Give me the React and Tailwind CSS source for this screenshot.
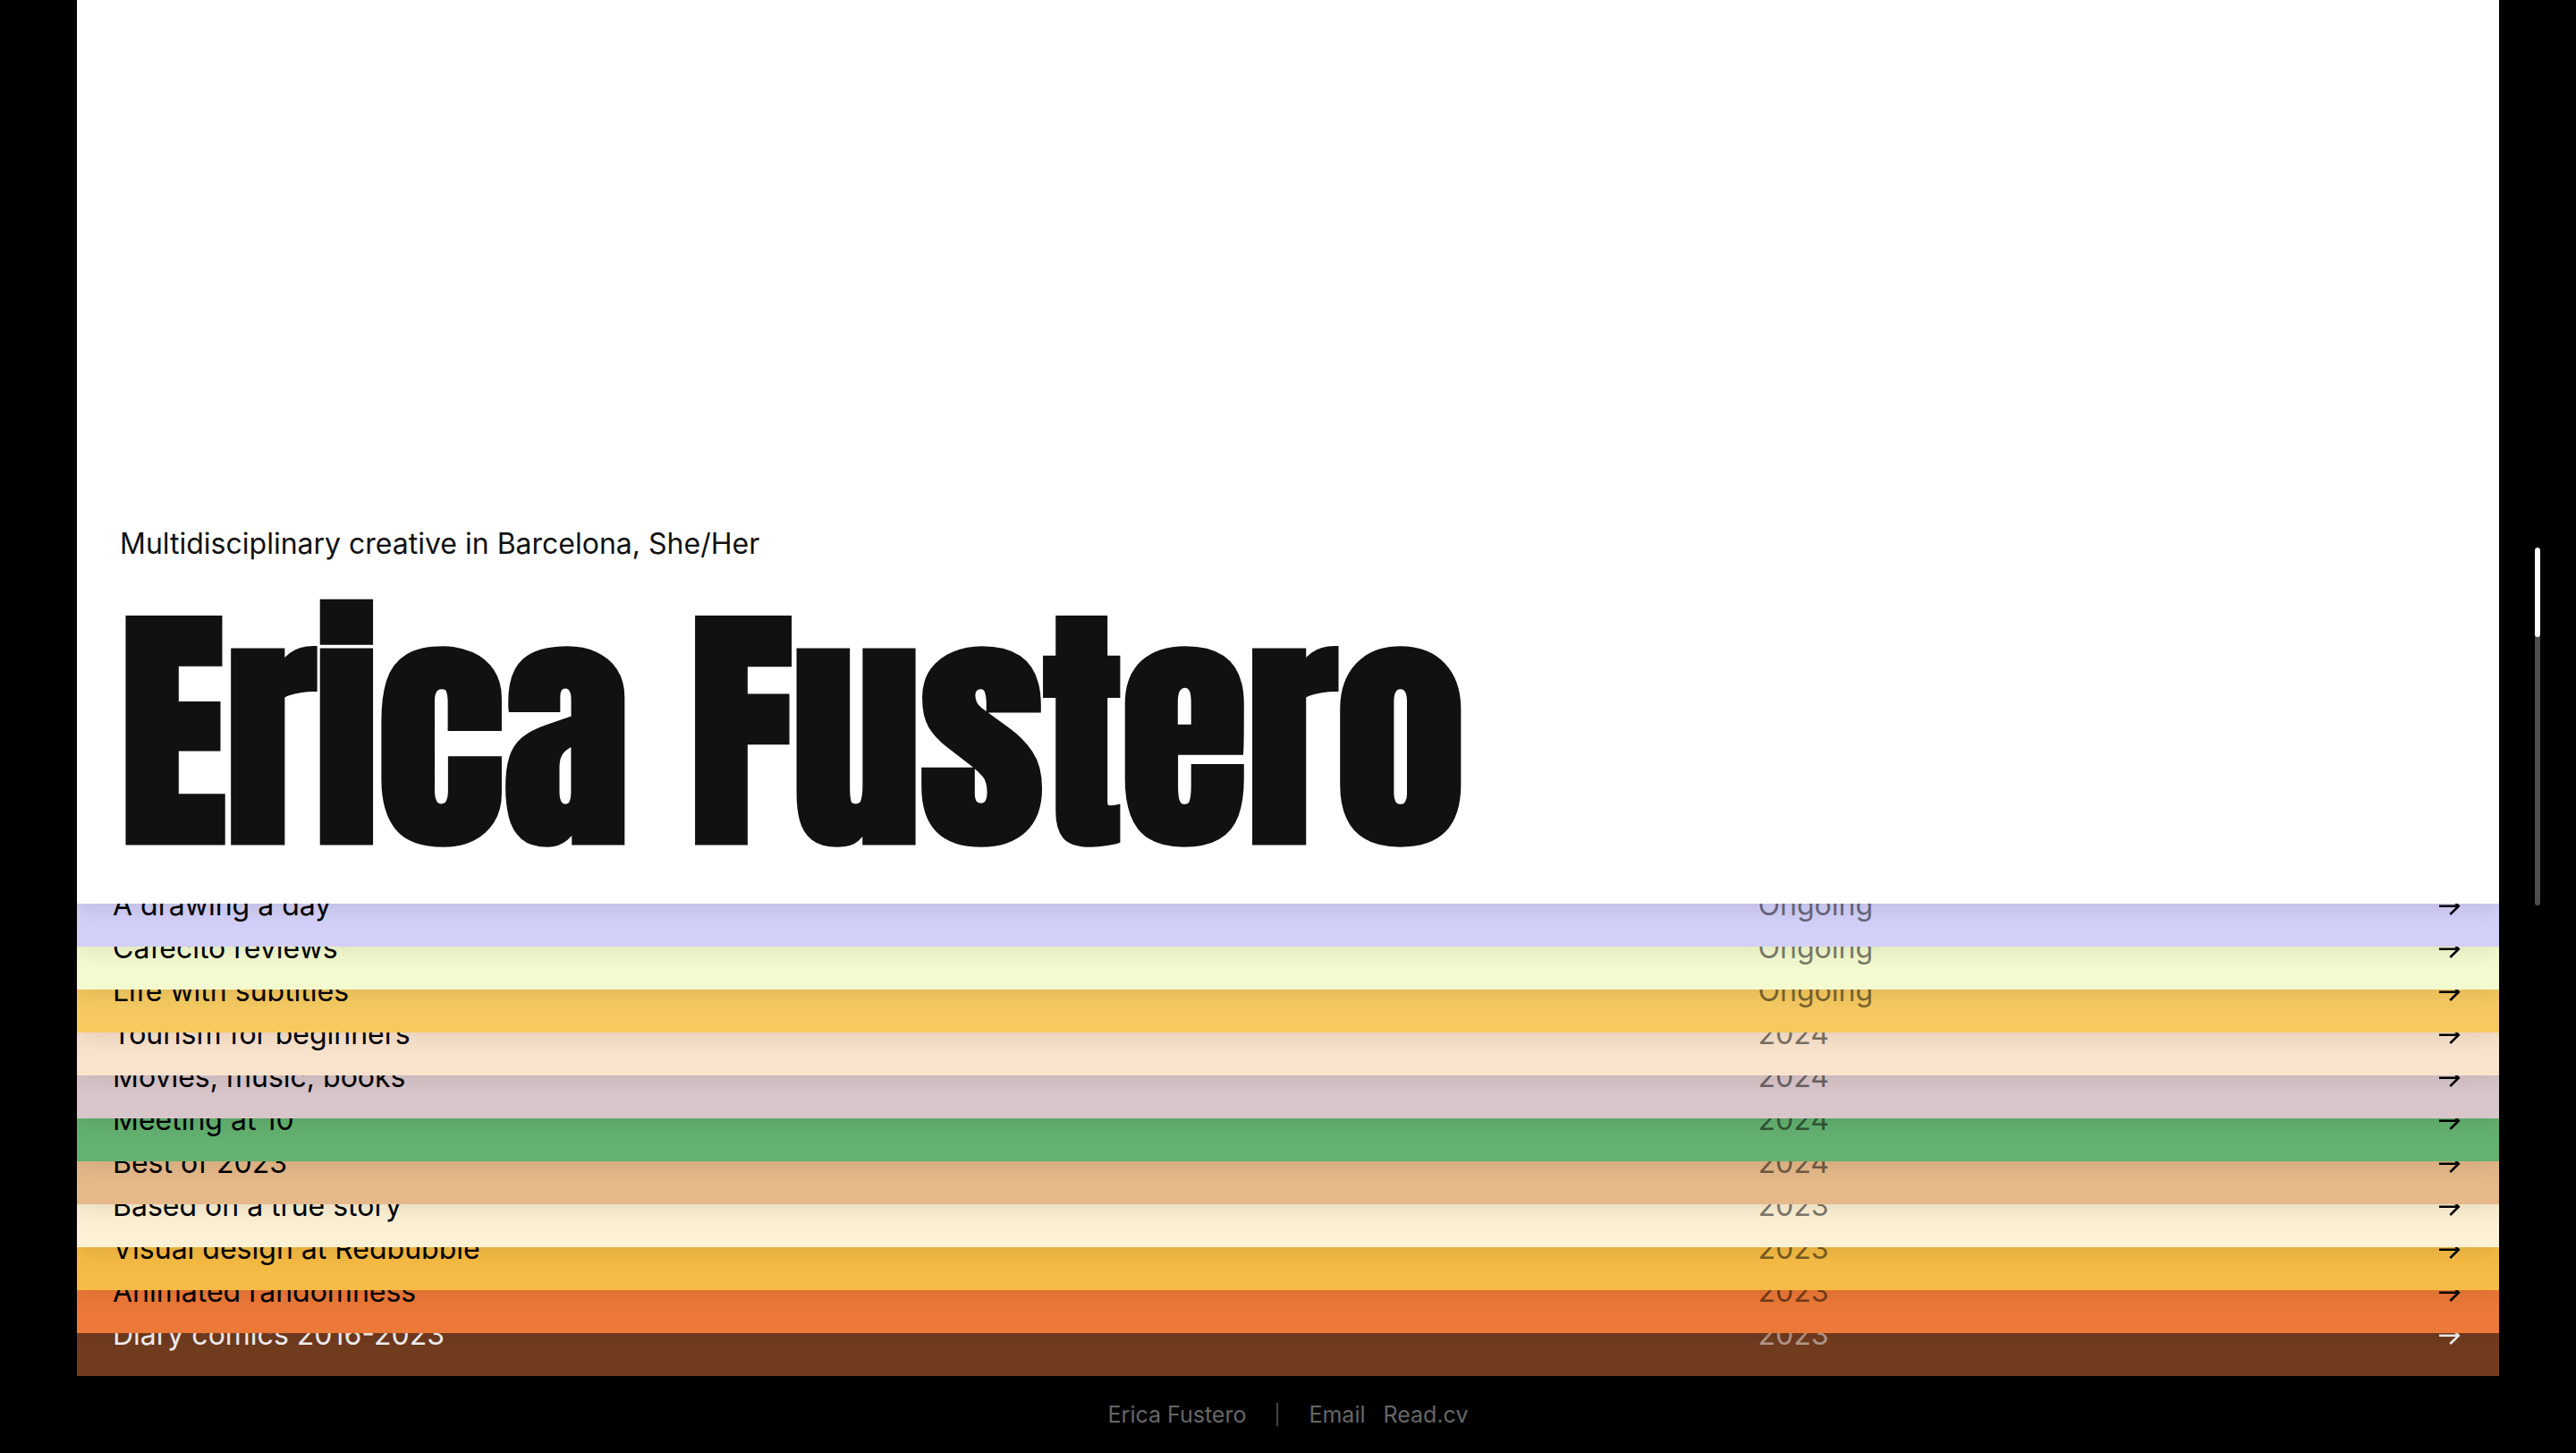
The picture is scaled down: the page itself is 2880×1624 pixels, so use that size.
const projects = [
  { title: "A drawing a day", year: "Ongoing", look: "z-[11] bg-[#d2cff8] text-black" },
  { title: "Cafecito reviews", year: "Ongoing", look: "z-[10] bg-[#f4fad0] text-black" },
  { title: "Life with subtitles", year: "Ongoing", look: "z-[9] bg-[#f6ca61] text-black" },
  { title: "Tourism for beginners", year: "2024", look: "z-[8] bg-[#fae3cc] text-black" },
  { title: "Movies, music, books", year: "2024", look: "z-[7] bg-[#d9c6ca] text-black" },
  { title: "Meeting at 10", year: "2024", look: "z-[6] bg-[#64b170] text-black" },
  { title: "Best of 2023", year: "2024", look: "z-[5] bg-[#e5b98a] text-black" },
  { title: "Based on a true story", year: "2023", look: "z-[4] bg-[#fcf1d4] text-black" },
  { title: "Visual design at Redbubble", year: "2023", look: "z-[3] bg-[#f5bb44] text-black" },
  { title: "Animated randomness", year: "2023", look: "z-[2] bg-[#ec7938] text-black" },
  { title: "Diary comics 2016-2023", year: "2023", look: "z-[1] bg-[#723c1f] text-[#f5f3f5]" },
];

function Arrow() {
  return (
    <svg viewBox="0 0 28 22" className="h-[22px] w-7" fill="none" stroke="currentColor" strokeWidth="2.5" aria-hidden="true">
      <path d="M1 11.7H23.5M13.3 2.4L22.8 11.7L13.3 21" />
    </svg>
  );
}

function ProjectRow({ title, year, look }) {
  return (
    <li className={`relative -mt-11 shadow-[0_4px_24px_rgba(0,0,0,0.1)] ${look}`}>
      <a href="#" className="grid h-[92px] grid-cols-[70%_1fr_auto] items-center px-10 text-[32px] leading-10">
        <span>{title}</span>
        <span className="opacity-50">{year}</span>
        <Arrow />
      </a>
    </li>
  );
}

export default function App() {
  return (
    <div className="grid min-h-screen grid-cols-[86px_1fr_86px] bg-black font-['Inter',sans-serif]">
      <div />
      <div className="flex flex-col">
        <main className="flex flex-1 flex-col overflow-hidden">
          <header className="relative z-20 flex flex-1 flex-col justify-end bg-white px-12 pb-8 text-[#111] shadow-[0_4px_24px_rgba(0,0,0,0.1)]">
            <p className="text-[32px] leading-10">Multidisciplinary creative in Barcelona, She/Her</p>
            <h1 className="mt-[30px] font-['Anton',Impact,sans-serif] text-[288px] leading-[320px] font-bold">Erica Fustero</h1>
          </header>
          <ul className="flex flex-col">
            {projects.map((project) => (
              <ProjectRow key={project.title} {...project} />
            ))}
          </ul>
        </main>
        <footer className="flex h-[86px] items-center justify-center text-[25px] leading-8 text-[#666]">
          <span>Erica Fustero</span>
          <span className="mx-[34px] h-[26px] w-0.5 bg-[#444]" />
          <nav className="flex gap-5">
            <a href="#">Email</a>
            <a href="#">Read.cv</a>
          </nav>
        </footer>
      </div>
      <aside className="flex items-center justify-center">
        <div className="h-[400px] w-1.5 overflow-hidden rounded-full bg-[#4d4d4d]">
          <div className="h-1/4 rounded-full bg-white" />
        </div>
      </aside>
    </div>
  );
}
